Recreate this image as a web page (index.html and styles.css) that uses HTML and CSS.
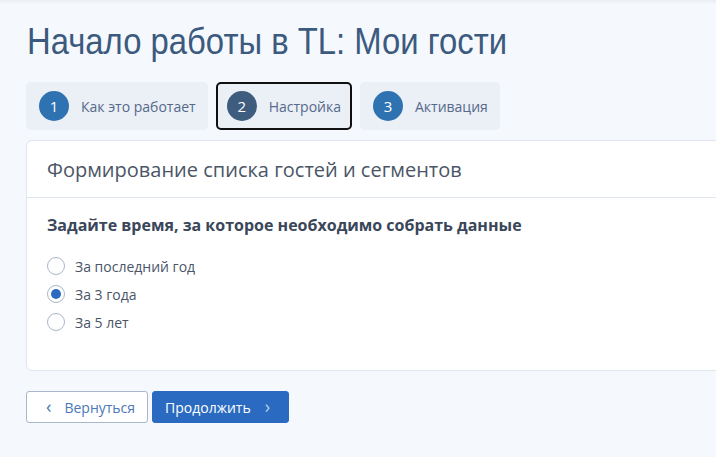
FILE: index.html
```html
<!DOCTYPE html>
<html lang="ru">
<head>
    <meta charset="UTF-8">
    <meta name="viewport" content="width=device-width, initial-scale=1.0">
    <title>Начало работы в TL: Мои гости</title>
    <link rel="stylesheet" href="styles.css">
</head>
<body>

    <div class="top-shadow"></div>

    <main class="page">
        <h1 class="page-title">Начало работы в TL: Мои гости</h1>

        <!-- Шаги мастера -->
        <nav class="steps">
            <div class="step">
                <span class="step-num">1</span>
                <span class="step-label">Как это работает</span>
            </div>
            <div class="step step-active">
                <span class="step-num">2</span>
                <span class="step-label">Настройка</span>
            </div>
            <div class="step">
                <span class="step-num">3</span>
                <span class="step-label">Активация</span>
            </div>
        </nav>

        <section class="card">
            <div class="card-header">Формирование списка гостей и сегментов</div>
            <div class="card-body">
                <div class="question">Задайте время, за которое необходимо собрать данные</div>
                <label class="radio"><input type="radio" name="period"><span class="radio-mark"></span>За последний год</label>
                <label class="radio"><input type="radio" name="period" checked><span class="radio-mark"></span>За 3 года</label>
                <label class="radio"><input type="radio" name="period"><span class="radio-mark"></span>За 5 лет</label>
            </div>
        </section>

        <div class="actions">
            <button class="btn btn-back"><span class="chev">&lsaquo;</span>Вернуться</button>
            <button class="btn btn-next">Продолжить<span class="chev">&rsaquo;</span></button>
        </div>
    </main>

</body>
</html>
```

FILE: styles.css
```css
html {
    overflow: hidden;
}
body {
    margin: 0;
    background-color: #f5f8fc;
    font-family: "Open Sans", Arial, sans-serif;
    color: #4a5d78;
}
.top-shadow {
    height: 4px;
    background: linear-gradient(#e9edf2, #f5f8fc);
}
.page {
    padding: 0 0 0 26px;
}
.page-title {
    margin: 16px 0 0 1px;
    font-family: "Liberation Sans", Arial, sans-serif;
    font-weight: normal;
    font-size: 36px;
    line-height: 44px;
    color: #3b5a7e;
    transform: scaleX(0.912);
    transform-origin: left center;
    white-space: nowrap;
}
.steps {
    display: flex;
    gap: 8px;
    margin-top: 18px;
}
.step {
    display: flex;
    align-items: center;
    gap: 12px;
    height: 48px;
    padding: 0 12px 0 13px;
    box-sizing: border-box;
    background-color: #ebeff6;
    border-radius: 5px;
    font-size: 14px;
    color: #55698a;
}
.step-active {
    border: 2px solid #111;
    padding: 0 9px;
}
.step-num {
    width: 30px;
    height: 30px;
    border-radius: 50%;
    background-color: #2f72b2;
    color: #fff;
    display: flex;
    align-items: center;
    justify-content: center;
    font-size: 15px;
}
.step-active .step-num {
    background-color: #3d5c7e;
}
.card {
    margin-top: 10px;
    width: 720px;
    background-color: #fff;
    border: 1px solid #e0e6ef;
    border-radius: 6px;
}
.card-header {
    padding: 15px 20px 14px;
    font-size: 20px;
    line-height: 27px;
    color: #4b5566;
    border-bottom: 1px solid #e0e6ef;
}
.card-body {
    padding: 16px 20px 34px;
}
.question {
    font-weight: bold;
    font-size: 16px;
    color: #3a4659;
    margin-bottom: 16px;
}
.radio {
    display: flex;
    align-items: center;
    gap: 10px;
    height: 28px;
    font-size: 14px;
    color: #4a5568;
}
.radio input {
    display: none;
}
.radio-mark {
    width: 16px;
    height: 16px;
    border: 1px solid #a9b6c8;
    border-radius: 50%;
    background-color: #fff;
    position: relative;
}
.radio input:checked + .radio-mark::after {
    content: "";
    position: absolute;
    left: 3px;
    top: 3px;
    width: 10px;
    height: 10px;
    border-radius: 50%;
    background-color: #2a6bc1;
}
.actions {
    display: flex;
    gap: 4px;
    margin-top: 20px;
}
.btn {
    height: 32px;
    border-radius: 3px;
    font-family: "Open Sans", Arial, sans-serif;
    font-size: 14px;
    display: flex;
    align-items: center;
    cursor: pointer;
}
.btn-back {
    width: 122px;
    background-color: #fff;
    border: 1px solid #a8b7cc;
    color: #4a78b8;
    padding: 0 0 0 19px;
}
.btn-back .chev {
    margin-right: 13px;
}
.btn-next {
    width: 137px;
    background-color: #2a6bc1;
    border: 1px solid #2a6bc1;
    color: #fff;
    padding: 0 0 0 12px;
}
.btn-next .chev {
    margin-left: 14px;
    color: #b9cdea;
}
.chev {
    font-size: 18px;
    line-height: 1;
    margin-top: -2px;
}
```
